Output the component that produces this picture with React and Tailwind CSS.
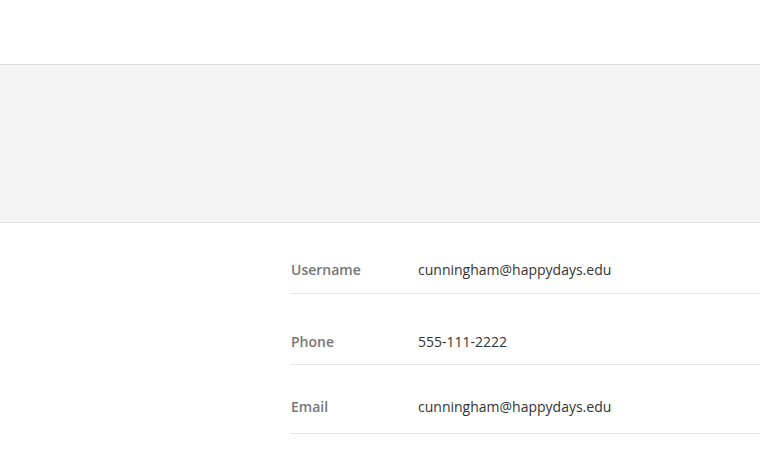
import React from "react";

const rows = [
  { label: "Username", value: "cunningham@happydays.edu", cls: "pt-[37px] pb-[13px]" },
  { label: "Phone", value: "555-111-2222", cls: "pt-[38px] pb-[12px]" },
  { label: "Email", value: "cunningham@happydays.edu", cls: "pt-[32px] pb-[16px]" },
];

export default function App() {
  return (
    <div className="min-h-[452px] bg-white font-['Open_Sans',sans-serif]">
      <header className="h-[65px] bg-white border-b border-[#dcdcdc]" />
      <section className="h-[158px] bg-[#f4f4f4] border-b border-[#e2e2e2]" />

      <div className="pl-[290px]">
        {rows.map((r) => (
          <div key={r.label} className={`flex items-baseline border-b border-[#e6e6e6] ${r.cls}`}>
            <div className="w-[128px] pl-px text-[14px] leading-5 font-semibold text-[#767676]">
              {r.label}
            </div>
            <div className="text-[14px] leading-5 text-[#333333]">{r.value}</div>
          </div>
        ))}
      </div>
    </div>
  );
}
